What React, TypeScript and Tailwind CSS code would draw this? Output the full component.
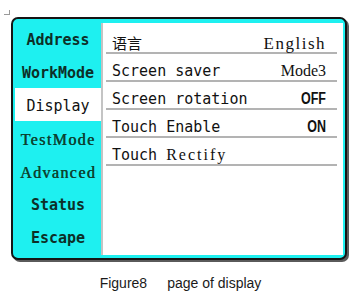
import React from "react";

type Item = { label: string; kind: "bold" | "serif" | "active" };
const menu: Item[] = [
  { label: "Address", kind: "bold" },
  { label: "WorkMode", kind: "bold" },
  { label: "Display", kind: "active" },
  { label: "TestMode", kind: "serif" },
  { label: "Advanced", kind: "serif" },
  { label: "Status", kind: "bold" },
  { label: "Escape", kind: "bold" },
];

function MenuItem({ item }: { item: Item }) {
  if (item.kind === "active") {
    return (
      <div className="h-[33px] pt-[3px] flex items-center justify-center bg-white text-[15px] text-[#111] font-['DejaVu_Sans_Mono','Liberation_Mono',monospace]">
        {item.label}
      </div>
    );
  }
  if (item.kind === "serif") {
    return (
      <div className="h-[33px] pt-[4px] flex items-center justify-center text-[16px] tracking-[1.4px] text-[#0c4230] font-['Liberation_Serif','DejaVu_Serif',serif] [text-shadow:0.5px_0_0_#0c4230]">
        {item.label}
      </div>
    );
  }
  return (
    <div className="h-[33px] pt-[4px] flex items-center justify-center text-[15px] font-bold text-[#0d2f28] font-['DejaVu_Sans_Mono','Liberation_Mono',monospace]">
      {item.label}
    </div>
  );
}

function Row({ children }: { children: React.ReactNode }) {
  return (
    <div className="h-[28px] border-b-2 border-[#b3b3b3] pt-[8px] pl-[6px] pr-[11px] flex justify-between items-baseline leading-[18px] text-[15px] text-[#111] font-['DejaVu_Sans_Mono','Liberation_Mono',monospace]">
      {children}
    </div>
  );
}

export default function App() {
  return (
    <div className="relative w-[361px] h-[293px] bg-white pt-[17px] pl-[11px]">
      <div className="absolute left-[4px] top-[14px] w-[6px] h-px bg-[#9a9a9a]" />
      <div className="absolute left-[9px] top-[10px] w-px h-[4px] bg-[#9a9a9a]" />
      <div className="w-[336px] h-[243px] border-2 border-[#151515] rounded-[7px] bg-[#1ef0f0] shadow-[2px_2px_0_#5a5a5a] flex overflow-hidden">
        <div className="w-[88px] pt-[3px] pl-[2px] flex flex-col">
          {menu.map((m) => (
            <MenuItem key={m.label} item={m} />
          ))}
        </div>
        <div className="w-[242px] mt-[4px] mb-[3px] bg-white border-l-2 border-[#c4c4c4] pt-[3px] pl-[3px] pr-[6px]">
          <Row>
            <span className="font-['Noto_Sans_CJK_SC',sans-serif] text-[15px]">语言</span>
            <span className="font-['Liberation_Serif',serif] text-[17px] tracking-[1.5px]">English</span>
          </Row>
          <Row>
            <span>Screen saver</span>
            <span className="font-['Liberation_Serif',serif] text-[16px]">Mode3</span>
          </Row>
          <Row>
            <span>Screen rotation</span>
            <span className="inline-block origin-right scale-x-[0.78] font-['Liberation_Sans',sans-serif] font-bold text-[16px]">
              OFF
            </span>
          </Row>
          <Row>
            <span>Touch Enable</span>
            <span className="inline-block origin-right scale-x-[0.78] font-['Liberation_Sans',sans-serif] font-bold text-[16px]">
              ON
            </span>
          </Row>
          <Row>
            <span>
              Touch <span className="font-['Liberation_Serif',serif] text-[16px] tracking-[2px]">Rectify</span>
            </span>
            <span />
          </Row>
        </div>
      </div>
      <div className="mt-[15px] -ml-[11px] h-[16px] leading-[16px] text-[14px] text-[#1a1a1a] text-center font-['Liberation_Sans',Arial,sans-serif]">
        Figure8<span className="inline-block w-[20px]" />page of display
      </div>
    </div>
  );
}
